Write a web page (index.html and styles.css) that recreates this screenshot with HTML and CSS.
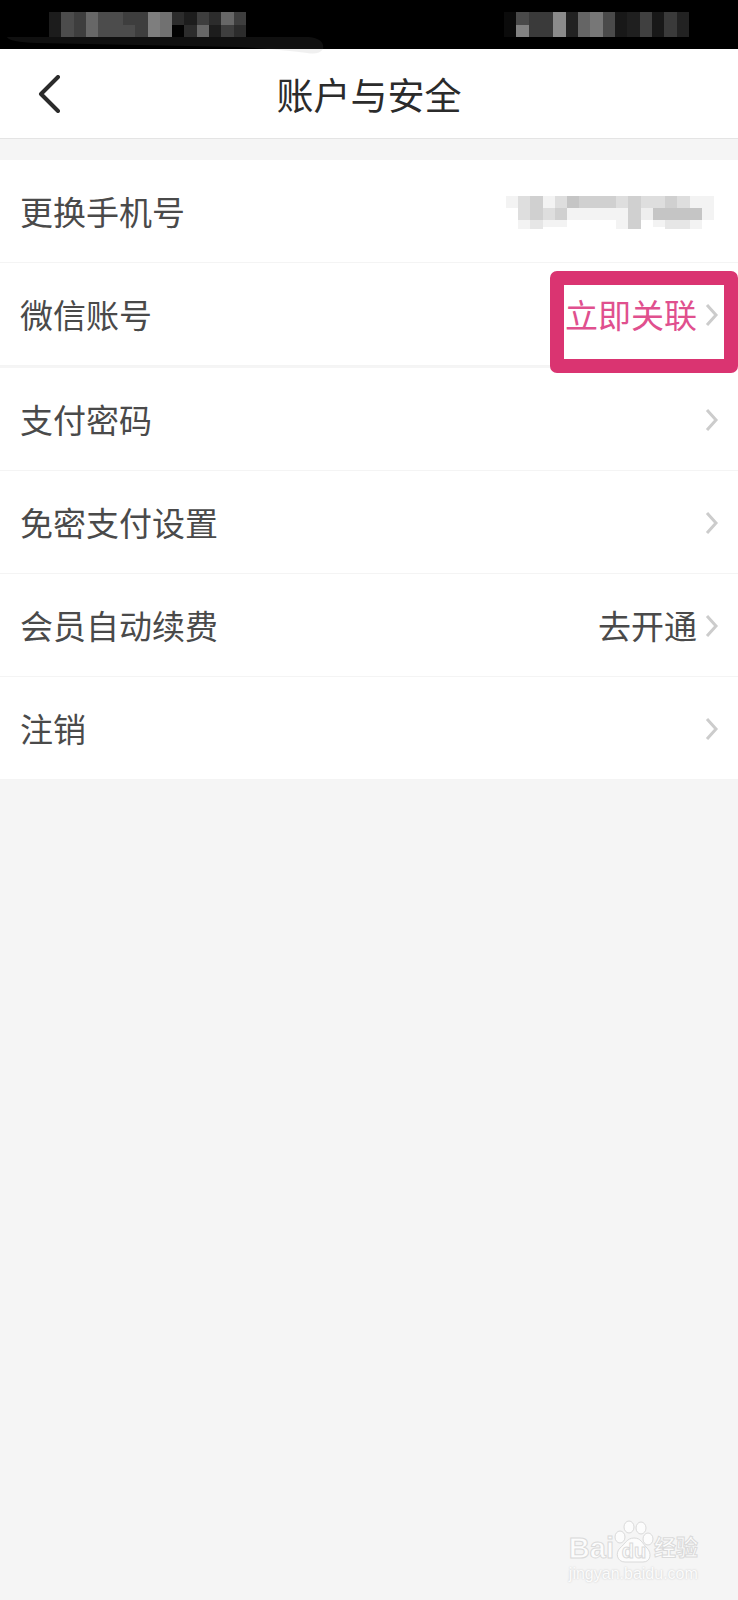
FILE: index.html
```html
<!DOCTYPE html>
<html lang="zh-CN">
<head>
    <meta charset="UTF-8">
    <meta name="viewport" content="width=device-width, initial-scale=1.0">
    <title>账户与安全</title>
    <link rel="stylesheet" href="styles.css">
</head>
<body>
    <div class="status-bar">
        <!-- masked carrier and clock -->
        <svg class="smear" viewBox="0 0 318 18" aria-hidden="true">
            <path d="M0 0H302Q318 2 316 12Q312 18 300 16Q270 12 230 10L30 6Q2 5 0 0Z" fill="#808080" fill-opacity="0.12"/>
        </svg>
        <svg class="mask" width="197" height="25" viewBox="0 0 16 2" preserveAspectRatio="none" shape-rendering="crispEdges" aria-hidden="true">
            <rect width="16" height="2" fill="#3e3e3e"/>
            <path fill="#1c1c1c" d="M0 0h1v2h-1z"/>
            <path fill="#4c4c4c" d="M1 0h1v2h-1zM4 0h2v2h-2zM6 1h1v1h-1z"/>
            <path fill="#676767" d="M3 0h1v2h-1zM14 0h1v1h-1zM12 1h1v1h-1z"/>
            <path fill="#7e7e7e" d="M8 0h1v2h-1z"/>
            <path fill="#717171" d="M9 0h1v2h-1z"/>
            <path fill="#020202" d="M10 1h1v1h-1z"/>
            <path fill="#1d1d1d" d="M11 0h1v1h-1zM13 1h1v1h-1z"/>
            <path fill="#2c2c2c" d="M10 0h1v1h-1zM11 1h1v1h-1zM13 0h1v1h-1zM15 1h1v1h-1z"/>
        </svg>
        <svg class="mask" width="185" height="25" viewBox="0 0 15 2" preserveAspectRatio="none" shape-rendering="crispEdges" aria-hidden="true">
            <rect width="15" height="2" fill="#3a3a3a"/>
            <path fill="#0b0b0b" d="M0 0h1v2h-1z"/>
            <path fill="#4a4a4a" d="M1 0h1v1h-1zM8 0h1v2h-1z"/>
            <path fill="#828282" d="M1 1h1v1h-1z"/>
            <path fill="#8b8b8b" d="M4 0h1v2h-1z"/>
            <path fill="#222222" d="M5 0h1v2h-1zM14 0h1v2h-1z"/>
            <path fill="#656565" d="M6 0h1v2h-1z"/>
            <path fill="#777777" d="M7 0h1v2h-1z"/>
            <path fill="#181818" d="M9 0h1v2h-1zM12 0h1v2h-1z"/>
            <path fill="#1f1f1f" d="M10 0h1v2h-1z"/>
            <path fill="#404040" d="M11 0h1v2h-1z"/>
        </svg>
    </div>

    <header class="header">
        <button type="button" class="back" aria-label="返回">
            <svg width="22" height="38" viewBox="0 0 22 38" aria-hidden="true">
                <path d="M20 2L3 19L20 36" fill="none" stroke="#2b2b2b" stroke-width="4" stroke-linecap="round" stroke-linejoin="round"/>
            </svg>
        </button>
        <h1>账户与安全</h1>
    </header>

    <main>
        <section class="group">
            <a href="#" class="row">
                <span class="label">更换手机号</span>
                <svg class="phone-mask" width="208" height="33" viewBox="0 0 17 27" preserveAspectRatio="none" shape-rendering="crispEdges" aria-hidden="true">
                    <path fill="#f3f3f3" d="M0 0h1v10h-1zM3 0h1v10h-1zM5 10h5v10h-5zM15 0h2v20h-2zM9 20h1v7h-1z"/>
                    <path fill="#dedede" d="M1 0h1v10h-1zM4 0h1v10h-1zM9 0h1v10h-1zM11 0h2v10h-2zM14 0h1v10h-1zM3 10h1v10h-1zM1 10h1v10h-1z"/>
                    <path fill="#eeeeee" d="M11 10h1v10h-1z"/>
                    <path fill="#d0d0d0" d="M2 0h1v20h-1zM4 10h1v10h-1zM6 0h3v10h-3zM10 0h1v27h-1zM13 0h1v10h-1z"/>
                    <path fill="#c5c5c5" d="M5 0h1v10h-1zM12 10h2v10h-2zM14 10h2v10h-2z"/>
                    <path fill="#e6e6e6" d="M2 20h1v7h-1zM13 20h2v7h-2z"/>
                    <path fill="#f3f3f3" d="M1 20h1v7h-1zM3 20h2v5h-2zM12 20h1v5h-1zM15 20h1v7h-1z"/>
                </svg>
            </a>
            <a href="#" class="row">
                <span class="label">微信账号</span>
                <span class="value link">立即关联</span>
                <svg class="arrow" viewBox="0 0 12 22" aria-hidden="true"><path d="M1 2L10 12L1 22"/></svg>
                <span class="highlight"></span>
            </a>
        </section>

        <section class="group">
            <a href="#" class="row">
                <span class="label">支付密码</span>
                <svg class="arrow" viewBox="0 0 12 22" aria-hidden="true"><path d="M1 2L10 12L1 22"/></svg>
            </a>
            <a href="#" class="row">
                <span class="label">免密支付设置</span>
                <svg class="arrow" viewBox="0 0 12 22" aria-hidden="true"><path d="M1 2L10 12L1 22"/></svg>
            </a>
            <a href="#" class="row">
                <span class="label">会员自动续费</span>
                <span class="value">去开通</span>
                <svg class="arrow" viewBox="0 0 12 22" aria-hidden="true"><path d="M1 2L10 12L1 22"/></svg>
            </a>
            <a href="#" class="row">
                <span class="label">注销</span>
                <svg class="arrow" viewBox="0 0 12 22" aria-hidden="true"><path d="M1 2L10 12L1 22"/></svg>
            </a>
        </section>
    </main>

    <footer class="watermark">
        <div class="brand">
            <span class="bai">Bai</span>
            <span class="paw">
                <svg width="40" height="44" viewBox="0 0 40 44" aria-hidden="true">
                    <ellipse cx="6" cy="17" rx="5" ry="6"/>
                    <ellipse cx="15" cy="7" rx="5" ry="6"/>
                    <ellipse cx="27" cy="8" rx="5" ry="6"/>
                    <ellipse cx="34" cy="19" rx="5" ry="6"/>
                    <path d="M20 18C13 18 11 24 6 28C1 33 3 42 11 42H29C37 42 38 33 33 28C28 23 27 18 20 18Z"/>
                </svg>
                <span class="du">du</span>
            </span>
            <span class="jy">经验</span>
        </div>
        <div class="site">jingyan.baidu.com</div>
    </footer>
</body>
</html>
```

FILE: styles.css
```css
* {
    box-sizing: border-box;
}
body {
    margin: 0;
    min-height: 100vh;
    display: flex;
    flex-direction: column;
    background-color: #f5f5f5;
    font-family: "Noto Sans CJK SC", sans-serif;
    color: #4a4a4a;
}
.status-bar {
    position: relative;
    display: flex;
    justify-content: space-between;
    height: 49px;
    padding: 12px 49px 0;
    background-color: #000;
}
.mask {
    display: block;
}
.smear {
    position: absolute;
    left: 7px;
    top: 37px;
    width: 318px;
    height: 18px;
}
.header {
    display: grid;
    grid-template-columns: 80px 1fr 80px;
    align-items: center;
    height: 90px;
    background-color: #fff;
    border-bottom: 1px solid #e4e4e4;
}
.header h1 {
    margin: 0;
    font-size: 37px;
    font-weight: 400;
    line-height: 54px;
    text-align: center;
    color: #2b2b2b;
}
.back {
    display: flex;
    padding: 0 0 0 38px;
    border: none;
    background: none;
    cursor: pointer;
}
main {
    margin-top: 21px;
}
.group + .group {
    margin-top: 2px;
}
.row {
    position: relative;
    display: flex;
    align-items: center;
    height: 103px;
    padding: 0 20px;
    background-color: #fff;
    border-bottom: 1px solid #f4f4f4;
    color: #4a4a4a;
    font-size: 33px;
    line-height: 48px;
    text-decoration: none;
}
.label {
    flex: 1;
}
.link {
    color: #e0508e;
}
.arrow {
    width: 12px;
    height: 22px;
    margin-left: 9px;
    overflow: visible;
    fill: none;
    stroke: #cccccc;
    stroke-width: 3;
}
.phone-mask {
    margin: 3px 4px 0 0;
}
/* frame drawn over the link action */
.highlight {
    position: absolute;
    top: 8px;
    right: 0;
    z-index: 1;
    width: 188px;
    height: 102px;
    border: 14px solid #da3471;
    border-radius: 7px;
}
.watermark {
    align-self: flex-end;
    margin-top: auto;
    padding: 0 40px 16px 0;
    color: #fcfcfc;
    font-family: "Liberation Sans", "Noto Sans CJK SC", sans-serif;
}
.brand {
    display: flex;
    justify-content: flex-end;
    align-items: flex-end;
    line-height: 32px;
    font-weight: 700;
    -webkit-text-stroke: 1px #dadada;
}
.bai {
    font-size: 29px;
}
.paw {
    position: relative;
    display: flex;
}
.paw svg {
    fill: #fcfcfc;
    stroke: #dadada;
}
.du {
    position: absolute;
    bottom: 0;
    left: 0;
    width: 100%;
    text-align: center;
    font-size: 20px;
    line-height: 26px;
}
.jy {
    font-size: 22px;
}
.site {
    font-size: 16px;
    line-height: 20px;
    text-shadow: 0 0 2px #c4c4c4;
}
```
